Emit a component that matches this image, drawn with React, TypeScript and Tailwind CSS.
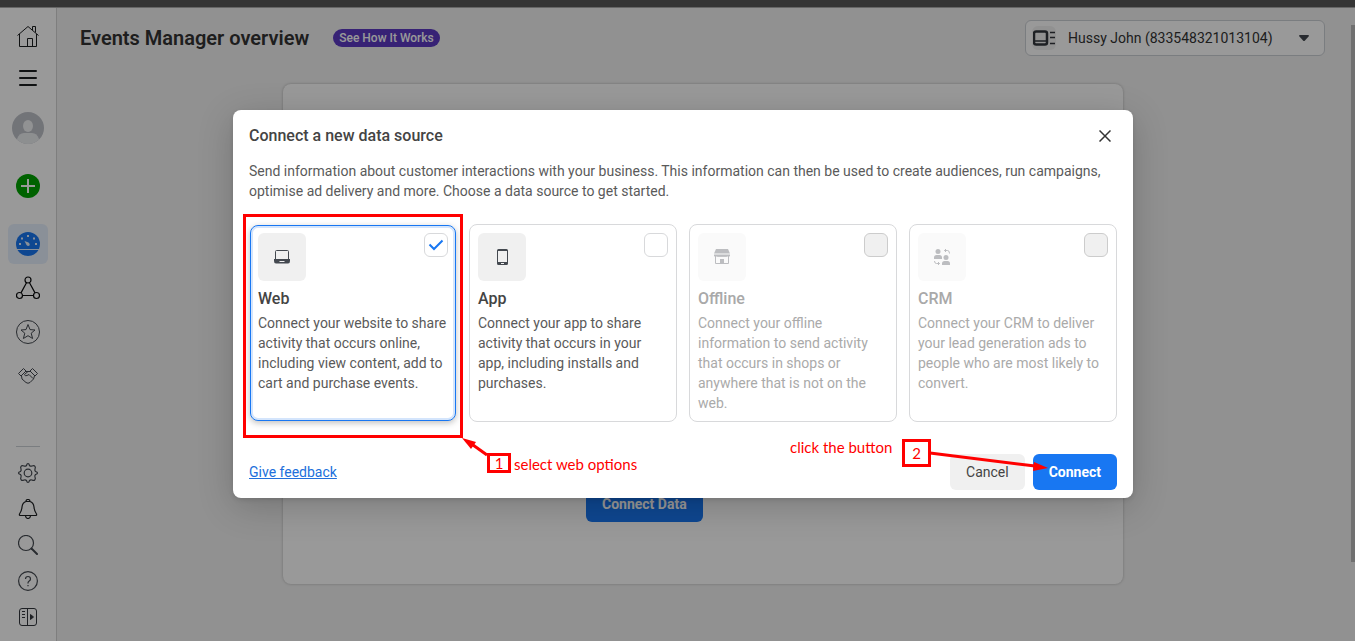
import React, { useState } from "react";
import type { ReactNode } from "react";

type Source = {
  id: string;
  title: string;
  text: string;
  icon: ReactNode;
  disabled?: boolean;
};

const LaptopIcon = () => (
  <svg width="16" height="16" viewBox="0 0 16 16" fill="none">
    <path d="M1.5 10V2.5Q1.5 1.5 2.5 1.5H13.5Q14.5 1.5 14.5 2.5V10" stroke="#444950" />
    <path d="M0 10H16V12Q16 14.5 14 14.5H2Q0 14.5 0 12Z" fill="#444950" />
    <path d="M5.5 12.5H10.5" stroke="#f0f0f0" />
  </svg>
);

const PhoneIcon = () => (
  <svg width="16" height="16" viewBox="0 0 16 16">
    <path
      fillRule="evenodd"
      d="M4.5 0H12.5Q14 0 14 1.5V14.5Q14 16 12.5 16H4.5Q3 16 3 14.5V1.5Q3 0 4.5 0ZM4 2V13H13V2Z"
      fill="#444950"
    />
    <path d="M7 14.5H10" stroke="#f0f0f0" />
  </svg>
);

const StoreIcon = () => (
  <svg width="16" height="16" viewBox="0 0 16 16" fill="#bcbdc0">
    <path d="M2 0H14L16 4.500H0Z" />
    <path d="M0 5.500H16V7Q15 8 14 7Q13 8.500 12 7.500Q11 8.500 10 7.500Q9 8.500 8 7.500Q7 8.500 6 7.500Q5 8.500 4 7.500Q3 8.500 2 7Q1 8 0 7Z" />
    <path d="M1.500 7V14.500H14.500V7" fill="none" stroke="#bcbdc0" />
    <path d="M6 10H10V15H6Z" />
  </svg>
);

const CrmIcon = () => (
  <svg width="16" height="16" viewBox="0 0 16 16" fill="#bcbdc0">
    <circle cx="4" cy="2.500" r="2.500" />
    <path d="M0 10V8.500Q0 6 2.500 6H5.500Q8 6 8 8.500V10Z" />
    <circle cx="12" cy="8.500" r="2.500" />
    <path d="M8 16V14.500Q8 12 10.500 12H13.500Q16 12 16 14.500V16Z" />
    <path d="M12 0L10.500 1.500L12 3M10.500 1.500H13.500Q15.500 1.500 15.500 4.500" fill="none" stroke="#bcbdc0" />
    <path d="M4 13L5.500 14.500L4 16M5.500 14.500H2.500Q0.500 14.500 0.500 12" fill="none" stroke="#bcbdc0" />
  </svg>
);

const sources: Source[] = [
  {
    id: "web",
    title: "Web",
    text: "Connect your website to share activity that occurs online, including view content, add to cart and purchase events.",
    icon: <LaptopIcon />,
  },
  {
    id: "app",
    title: "App",
    text: "Connect your app to share activity that occurs in your app, including installs and purchases.",
    icon: <PhoneIcon />,
  },
  {
    id: "offline",
    title: "Offline",
    text: "Connect your offline information to send activity that occurs in shops or anywhere that is not on the web.",
    icon: <StoreIcon />,
    disabled: true,
  },
  {
    id: "crm",
    title: "CRM",
    text: "Connect your CRM to deliver your lead generation ads to people who are most likely to convert.",
    icon: <CrmIcon />,
    disabled: true,
  },
];

function NavButton({ label, className = "", children }: { label: string; className?: string; children: ReactNode }) {
  return (
    <button type="button" aria-label={label} className={`flex w-10 shrink-0 items-center justify-center rounded-md ${className}`}>
      {children}
    </button>
  );
}

function Sidebar() {
  return (
    <nav className="flex w-[57px] shrink-0 flex-col items-center border-r border-[#d2d2d2] bg-white pt-2 pb-1.5 text-[#444950]">
      <NavButton label="Home" className="h-10">
        <svg width="24" height="24" viewBox="0 0 24 24" fill="none" stroke="#1c1e21">
          <path d="M1.500 11.500L12 2.500L22.500 11.500" />
          <path d="M3.500 10V22.500H20.500V10M11.500 22.500V14.500H16.500V22.500M16.500 6V2.500H19.500V8.500" />
        </svg>
      </NavButton>
      <NavButton label="Menu" className="mt-0.5 h-10">
        <svg width="20" height="20" viewBox="0 0 20 20" stroke="#1c1e21" strokeWidth="2" strokeLinecap="round">
          <path d="M2 3H18M2 10H18M2 17H18" />
        </svg>
      </NavButton>
      <NavButton label="Profile" className="mt-3.5 h-8">
        <svg width="32" height="32" viewBox="0 0 32 32">
          <clipPath id="avatar"><circle cx="16" cy="16" r="16" /></clipPath>
          <g clipPath="url(#avatar)">
            <rect width="32" height="32" fill="#bfc2c9" />
            <ellipse cx="16" cy="14" rx="5" ry="6" fill="#f2f3f5" />
            <path d="M5 32V27Q7 21 12 21H20Q25 21 27 27V32Z" fill="#eceef1" />
          </g>
        </svg>
      </NavButton>
      <NavButton label="Create" className="mt-[22px] h-10">
        <svg width="24" height="24" viewBox="0 0 24 24">
          <circle cx="12" cy="12" r="12" fill="#00a400" />
          <path d="M12 5V19M5 12H19" stroke="#fff" strokeWidth="2" />
        </svg>
      </NavButton>
      <div className="mt-[18px] flex flex-col gap-1">
        <NavButton label="Overview" className="h-10 bg-[#e7f0fd]">
          <svg width="24" height="24" viewBox="0 0 24 24">
            <circle cx="12" cy="12" r="12" fill="#1877f2" />
            <path d="M1 17.500H23" stroke="#e7f0fd" />
            <g fill="#e7f0fd">
              <path d="M8.500 9L12.500 10.500Q14.500 12 13.500 13.500Q12 14.500 10.500 13Z" />
              <rect x="11" y="3" width="2" height="2" />
              <rect x="5" y="5.500" width="2" height="2" />
              <rect x="17" y="5.500" width="2" height="2" />
              <rect x="3" y="11" width="2" height="2" />
              <rect x="19" y="11" width="2" height="2" />
            </g>
          </svg>
        </NavButton>
        <NavButton label="Data sources" className="h-10">
          <svg width="24" height="24" viewBox="0 0 24 24" fill="none" stroke="#0a0b0c" strokeWidth="1.200">
            <circle cx="12" cy="4" r="3" />
            <circle cx="3.500" cy="19.500" r="3" />
            <circle cx="20.500" cy="19.500" r="3" />
            <path d="M10.500 6.700L5 16.900M13.500 6.700L19 16.900M6.500 19.500H17.500" />
          </svg>
        </NavButton>
        <NavButton label="Custom conversions" className="h-10">
          <svg width="24" height="24" viewBox="0 0 24 24" fill="none" stroke="currentColor">
            <circle cx="12" cy="12" r="11.500" />
            <path d="M12 4.500L14 9.600L19 10L15.200 13.200L16.600 18.500L12 15.700L7.400 18.500L8.800 13.200L5 10L10 9.600Z" strokeLinejoin="round" />
          </svg>
        </NavButton>
        <NavButton label="Partner integrations" className="h-10">
          <svg width="20" height="20" viewBox="0 0 20 20" fill="none" stroke="currentColor" strokeLinejoin="round">
            <path d="M5.500 2.500L0.500 7.500L3 10L8 5Z" />
            <path d="M14.500 2.500L19.500 7.500L17 10L12 5Z" />
            <path d="M7.500 5.500H12.500M3.500 10L4 13L8 16.500Q10 18 12 16.500L15.500 13L16.500 10" />
            <path d="M10 5.500L6.500 8.500Q7 10.500 9 9.500L11 8.500L15 12.500" />
          </svg>
        </NavButton>
      </div>
      <div className="mt-auto flex flex-col items-center">
        <hr className="mb-2 w-6 border-t border-[#ccd0d5]" />
        <NavButton label="Settings" className="h-9">
          <svg width="22" height="22" viewBox="0 0 22 22" fill="none" stroke="currentColor" strokeWidth="1.200" strokeLinejoin="round">
            <circle cx="11" cy="11" r="3.800" />
            <path d="M9.500 3.500Q10 1.500 11 1.500T12.500 3.500Q13.500 4.600 15 4Q17 3 17.800 4.200Q18.800 5.300 18 7Q17.500 8.500 18.500 9.500Q20.500 10 20.500 11T18.500 12.500Q17.500 13.500 18 15Q18.800 16.700 17.800 17.800Q17 19 15 18Q13.500 17.400 12.500 18.500Q12 20.500 11 20.500T9.500 18.500Q8.500 17.400 7 18Q5 19 4.200 17.800Q3.200 16.700 4 15Q4.500 13.500 3.500 12.500Q1.500 12 1.500 11T3.500 9.500Q4.500 8.500 4 7Q3.200 5.300 4.200 4.200Q5 3 7 4Q8.500 4.600 9.500 3.500Z" />
          </svg>
        </NavButton>
        <NavButton label="Notifications" className="h-9">
          <svg width="20" height="20" viewBox="0 0 20 20" fill="none" stroke="#1c1e21" strokeWidth="1.200" strokeLinejoin="round">
            <path d="M8 2.500Q8 0.500 10 0.500T12 2.500Q15.500 3.500 16 8Q16.300 12 18.500 15Q19 16.500 17.500 16.500H2.500Q1 16.500 1.500 15Q3.700 12 4 8Q4.500 3.500 8 2.500ZM8 2.500H12M7.500 17Q8 19.500 10 19.500T12.500 17" />
          </svg>
        </NavButton>
        <NavButton label="Search" className="h-9">
          <svg width="20" height="20" viewBox="0 0 20 20" fill="none" stroke="currentColor">
            <circle cx="8" cy="8" r="7.500" strokeWidth="1.200" />
            <path d="M13.500 13.500L19 19" strokeWidth="2" strokeLinecap="round" />
          </svg>
        </NavButton>
        <NavButton label="Help" className="h-9">
          <svg width="20" height="20" viewBox="0 0 20 20" fill="none" stroke="currentColor" strokeWidth="1.200">
            <circle cx="10" cy="10" r="9.400" />
            <path d="M7.500 8Q7.500 5.500 10 5.500T12.500 8Q12.500 9.200 11.200 10T10 12V12.500M10 14V15.200" />
          </svg>
        </NavButton>
        <NavButton label="Expand navigation" className="h-9">
          <svg width="18" height="18" viewBox="0 0 18 18" fill="none" stroke="#32363c">
            <rect x="0.500" y="0.500" width="17" height="17" rx="2.500" />
            <path d="M8.500 1V17M3 3.500H6M3 6.500H6M3 9.500H6" />
            <path d="M11.500 6.500L14.500 9L11.500 11.500Z" fill="#32363c" />
          </svg>
        </NavButton>
      </div>
    </nav>
  );
}

function Overview() {
  return (
    <main className="min-w-0 flex-1 bg-[#f2f2f2]">
      <header className="flex items-center pt-3 pr-[26px] pl-[23px]">
        <h1 className="text-xl font-semibold text-[#333]">Events Manager overview</h1>
        <button type="button" className="ml-6 h-[18px] rounded-full bg-[#5c39c4] px-1.5 text-xs leading-[18px] font-medium text-white">
          See How It Works
        </button>
        <div className="relative ml-auto w-[300px]">
          <select
            aria-label="Account"
            className="h-9 w-full appearance-none rounded-md border border-[#ccd0d5] bg-white pr-10 pl-[42px] text-sm text-[#333]"
          >
            <option>Hussy John (833548321013104)</option>
          </select>
          <span className="pointer-events-none absolute top-1.5 left-[7px] flex size-6 items-center justify-center rounded-md bg-[#f2f2f2]">
            <svg className="shrink-0" width="22" height="16" viewBox="0 0 22 16" fill="none" stroke="#32363c">
              <rect x="1" y="1.500" width="13" height="13" rx="2" strokeWidth="2.500" />
              <path d="M2 11H13" strokeWidth="1.500" />
              <path d="M17 2.500H22M17 7.500H22M17 13.500H22" strokeWidth="1.500" />
            </svg>
          </span>
          <svg className="pointer-events-none absolute top-[15px] right-4" width="10" height="6" viewBox="0 0 10 6">
            <path d="M0 1Q0 0 1 0H9Q10 0 10 1L6 5.500Q5 6.500 4 5.500Z" fill="#444950" />
          </svg>
        </div>
      </header>
      <div className="pt-7 pr-0.5">
        <section className="mx-auto flex h-[500px] w-full max-w-[840px] items-end rounded-lg bg-white pb-[62px] pl-[303px] shadow-[0_0_3px_rgba(0,0,0,0.25)]">
          <button type="button" className="h-9 rounded-md bg-[#1877f2] px-4 text-sm font-bold text-white">
            Connect Data
          </button>
        </section>
      </div>
    </main>
  );
}

function SourceCard({ source, checked, onToggle }: { source: Source; checked: boolean; onToggle: () => void }) {
  const frame = checked
    ? "m-px border border-[#1877f2] p-[7px] shadow-[inset_0_0_0_2px_#d4e5fc,0_2px_6px_rgba(0,0,0,0.25)]"
    : "border border-[#d8d9db] p-2";
  const box = source.disabled ? "border-[#ccc] bg-[#f0f0f0]" : "border-[#d8d9db] bg-white";
  return (
    <label className={`flex flex-col rounded-lg bg-white ${frame}`}>
      <span className="flex items-start justify-between">
        <span className={`flex size-12 items-center justify-center rounded-md ${source.disabled ? "bg-[#fafafa]" : "bg-[#f0f0f0]"}`}>
          {source.icon}
        </span>
        <span className="relative size-6">
          <input
            type="checkbox"
            checked={checked}
            disabled={source.disabled}
            onChange={onToggle}
            className={`block size-6 appearance-none rounded-md border ${box}`}
          />
          {checked && (
            <svg className="pointer-events-none absolute inset-0" width="24" height="24" viewBox="0 0 24 24" fill="none">
              <path d="M5.500 11.500L10 16L18.500 7.500" stroke="#1877f2" strokeWidth="2" />
            </svg>
          )}
        </span>
      </span>
      <span className={`mt-2 text-base leading-5 font-medium ${source.disabled ? "text-[#a9a9a9]" : "text-[#444]"}`}>
        {source.title}
      </span>
      <span className={`mt-1 text-sm leading-5 ${source.disabled ? "text-[#aaa]" : "text-[#5a5a5a]"}`}>{source.text}</span>
    </label>
  );
}

function Annotations() {
  return (
    <div className="pointer-events-none absolute inset-0 font-[Lato,sans-serif] text-[15px] leading-5 text-[#f00]">
      <div className="absolute top-[104px] left-[10px] h-[224px] w-[220px] border-3 border-[#f00]" />
      <svg className="absolute inset-0 size-full" fill="none" stroke="#f00" strokeWidth="3">
        <path d="M254 345L240 335" />
        <path d="M229 328L243 332L238 339Z" fill="#f00" stroke="none" />
        <path d="M697 343L802 356" />
        <path d="M815 358L801 352L800 361Z" fill="#f00" stroke="none" />
      </svg>
      <div className="absolute top-[343px] left-[254px] flex h-5 w-6 items-center justify-center border-3 border-[#f00]">1</div>
      <div className="absolute top-[344px] left-[281px] whitespace-nowrap">select web options</div>
      <div className="absolute top-[327px] left-[557px] whitespace-nowrap">click the button</div>
      <div className="absolute top-[329px] left-[669px] flex h-7 w-[29px] items-center justify-center border-3 border-[#f00]">2</div>
    </div>
  );
}

function ConnectDialog() {
  const [selected, setSelected] = useState("web");
  return (
    <div className="absolute inset-0 flex items-start justify-center bg-black/40 pt-[102px] pl-[11px]">
      <div
        role="dialog"
        aria-labelledby="dialog-title"
        className="relative w-full max-w-[900px] rounded-lg bg-white px-4 pt-3.5 pb-2 shadow-[0_2px_4px_rgba(0,0,0,0.1),0_8px_36px_rgba(0,0,0,0.2)]"
      >
        <div className="flex h-6 items-center justify-between">
          <h2 id="dialog-title" className="text-base font-medium text-[#444]">Connect a new data source</h2>
          <button type="button" aria-label="Close" className="flex size-6 items-center justify-center">
            <svg width="12" height="12" viewBox="0 0 12 12" stroke="#333" strokeWidth="1.500">
              <path d="M0.500 0.500L11.500 11.500M11.500 0.500L0.500 11.500" />
            </svg>
          </button>
        </div>
        <p className="mt-[13px] text-sm leading-5 text-[#5a5a5a]">
          Send information about customer interactions with your business. This information can then be used to create
          audiences, run campaigns, optimise ad delivery and more. Choose a data source to get started.
        </p>
        <div className="mt-[23px] grid grid-cols-4 gap-3">
          {sources.map((source) => (
            <SourceCard
              key={source.id}
              source={source}
              checked={selected === source.id}
              onToggle={() => setSelected(source.id)}
            />
          ))}
        </div>
        <div className="mt-8 flex items-center gap-2">
          <a href="#feedback" className="mr-auto text-sm text-[#216fdb] underline">Give feedback</a>
          <button type="button" className="h-9 rounded-md bg-[#f0f0f0] px-4 text-sm text-[#444]">Cancel</button>
          <button type="button" className="h-9 rounded-md bg-[#1877f2] px-4 text-sm font-bold text-white">Connect</button>
        </div>
        <Annotations />
      </div>
    </div>
  );
}

export default function App() {
  return (
    <div className="flex min-h-screen flex-col font-[Roboto,sans-serif]">
      <div className="h-2 border-b border-[#666] bg-[#353535]" />
      <div className="relative flex flex-1">
        <Sidebar />
        <Overview />
        <div className="w-1 bg-[#f2f2f2] pt-[17px]">
          <div className="h-[537px] bg-[#bbb]" />
        </div>
        <ConnectDialog />
      </div>
    </div>
  );
}
